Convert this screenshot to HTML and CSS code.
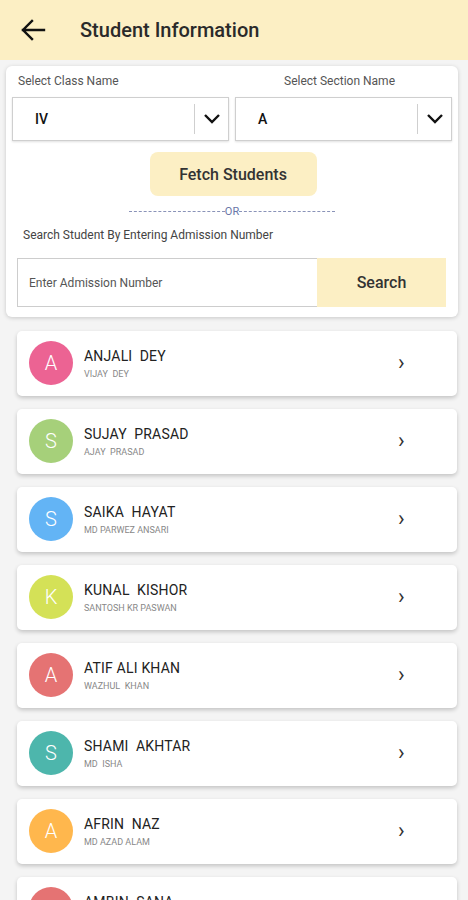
FILE: index.html
```html
<html>
<head>
  <link rel="stylesheet" href="styles.css">
</head>
<body>
  <div class="appbar">
    <svg class="back" width="26" height="22" viewBox="0 0 26 22">
      <path d="M24 11H3M12 2L3 11l9 9" fill="none" stroke="#111" stroke-width="2.4" stroke-linecap="square"/>
    </svg>
    <span class="title">Student Information</span>
  </div>

  <div class="filter">
    <div class="selects">
      <div class="field">
        <label class="lbl">Select Class Name</label>
        <div class="select">
          <span class="value">IV</span>
          <span class="arrow"><svg width="18" height="12" viewBox="0 0 18 12"><path d="M2 2l7 7 7-7" fill="none" stroke="#111" stroke-width="2.4"/></svg></span>
        </div>
      </div>
      <div class="field">
        <label class="lbl center">Select Section Name</label>
        <div class="select">
          <span class="value">A</span>
          <span class="arrow"><svg width="18" height="12" viewBox="0 0 18 12"><path d="M2 2l7 7 7-7" fill="none" stroke="#111" stroke-width="2.4"/></svg></span>
        </div>
      </div>
    </div>
    <div class="fetch-row"><button class="fetch">Fetch Students</button></div>
    <div class="or"><span class="dash"></span><span class="or-text">OR</span><span class="dash"></span></div>
    <div class="hint">Search Student By Entering Admission Number</div>
    <div class="search">
      <input type="text" placeholder="Enter Admission Number">
      <button class="search-btn">Search</button>
    </div>
  </div>

  <div class="list">
    <div class="student"><div class="avatar pink">A</div><div class="info"><div class="name">ANJALI&nbsp; DEY</div><div class="parent">VIJAY&nbsp; DEY</div></div><span class="chev">&#x203A;</span></div>
    <div class="student"><div class="avatar green">S</div><div class="info"><div class="name">SUJAY&nbsp; PRASAD</div><div class="parent">AJAY&nbsp; PRASAD</div></div><span class="chev">&#x203A;</span></div>
    <div class="student"><div class="avatar blue">S</div><div class="info"><div class="name">SAIKA&nbsp; HAYAT</div><div class="parent">MD PARWEZ ANSARI</div></div><span class="chev">&#x203A;</span></div>
    <div class="student"><div class="avatar lime">K</div><div class="info"><div class="name">KUNAL&nbsp; KISHOR</div><div class="parent">SANTOSH KR PASWAN</div></div><span class="chev">&#x203A;</span></div>
    <div class="student"><div class="avatar red">A</div><div class="info"><div class="name">ATIF ALI KHAN</div><div class="parent">WAZHUL&nbsp; KHAN</div></div><span class="chev">&#x203A;</span></div>
    <div class="student"><div class="avatar teal">S</div><div class="info"><div class="name">SHAMI&nbsp; AKHTAR</div><div class="parent">MD&nbsp; ISHA</div></div><span class="chev">&#x203A;</span></div>
    <div class="student"><div class="avatar orange">A</div><div class="info"><div class="name">AFRIN&nbsp; NAZ</div><div class="parent">MD AZAD ALAM</div></div><span class="chev">&#x203A;</span></div>
    <div class="student"><div class="avatar red">A</div><div class="info"><div class="name">AMBIN&nbsp; SANA</div><div class="parent">MD&nbsp; SANA</div></div><span class="chev">&#x203A;</span></div>
  </div>
</body>
</html>
```

FILE: styles.css
```css
body {
  margin: 0;
  background: #f4f4f4;
  font-family: Roboto, "Noto Sans", sans-serif;
  color: #222;
  height: 900px;
  overflow: hidden;
}
.appbar {
  height: 60px;
  background: #fcefc4;
  display: flex;
  align-items: center;
  padding-left: 20px;
}
.back {
  margin-right: 34px;
}
.title {
  font-size: 20px;
  font-weight: 500;
  color: #2a2a2a;
}
.filter {
  margin: 6px 10px 0 6px;
  background: #fff;
  border-radius: 6px;
  box-shadow: 0 1px 4px rgba(0, 0, 0, 0.18);
  padding: 8px 6px 10px 6px;
}
.selects {
  display: flex;
  gap: 6px;
}
.field {
  flex: 1;
}
.lbl {
  display: block;
  font-size: 12px;
  color: #555;
  padding-left: 6px;
  height: 23px;
}
.lbl.center {
  text-align: center;
  padding-left: 0;
  padding-right: 8px;
}
.select {
  height: 42px;
  border: 1px solid #cfcfcf;
  box-shadow: 0 1px 2px rgba(0, 0, 0, 0.12);
  display: flex;
  align-items: center;
}
.value {
  flex: 1;
  padding-left: 22px;
  font-size: 14px;
  font-weight: 500;
  color: #111;
}
.arrow {
  border-left: 1px solid #cfcfcf;
  height: 30px;
  width: 33px;
  display: flex;
  align-items: center;
  justify-content: center;
}
.fetch-row {
  display: flex;
  justify-content: center;
  padding-top: 11px;
}
.fetch {
  width: 167px;
  height: 44px;
  background: #fcefc4;
  border: 0;
  border-radius: 8px;
  font-family: Roboto, sans-serif;
  font-size: 16px;
  font-weight: 500;
  color: #333;
  margin-left: 2px;
}
.or {
  display: flex;
  align-items: center;
  justify-content: center;
  margin-top: 7px;
  height: 16px;
}
.dash {
  width: 96px;
  border-top: 1px dashed #8a93b8;
}
.or-text {
  font-size: 11px;
  color: #6a76a8;
}
.hint {
  font-size: 12px;
  color: #444;
  padding: 9px 0 0 11px;
  height: 24px;
}
.search {
  display: flex;
  margin: 6px 6px 0 5px;
  height: 49px;
}
.search input {
  flex: 1;
  border: 1px solid #cdcdcd;
  border-right: 0;
  padding-left: 11px;
  font-family: Roboto, sans-serif;
  font-size: 12px;
  outline: none;
}
.search input::placeholder {
  color: #555;
}
.search-btn {
  width: 129px;
  background: #fcefc4;
  border: 0;
  font-family: Roboto, sans-serif;
  font-size: 16px;
  font-weight: 500;
  color: #333;
}
.list {
  padding: 14px 11px 0 17px;
  display: flex;
  flex-direction: column;
  gap: 13px;
}
.student {
  height: 65px;
  background: #fff;
  border-radius: 5px;
  box-shadow: 0 2px 4px rgba(0, 0, 0, 0.2);
  display: flex;
  align-items: center;
  padding-left: 12px;
}
.avatar {
  width: 44px;
  height: 44px;
  border-radius: 50%;
  color: #fff;
  font-size: 20px;
  font-weight: 300;
  display: flex;
  align-items: center;
  justify-content: center;
  flex-shrink: 0;
  margin-top: -2px;
}
.pink { background: #ec6393; }
.green { background: #a6d07a; }
.blue { background: #63b4f5; }
.lime { background: #d4e157; }
.red { background: #e57373; }
.teal { background: #4db6ac; }
.orange { background: #ffb74d; }
.info {
  flex: 1;
  padding-left: 11px;
  margin-top: 0;
}
.name {
  font-size: 14px;
  color: #222;
  letter-spacing: 0.2px;
}
.parent {
  font-size: 9px;
  color: #888;
  margin-top: 5px;
}
.chev {
  font-size: 22px;
  color: #333;
  width: 59px;
  margin-top: -2px;
}
```
